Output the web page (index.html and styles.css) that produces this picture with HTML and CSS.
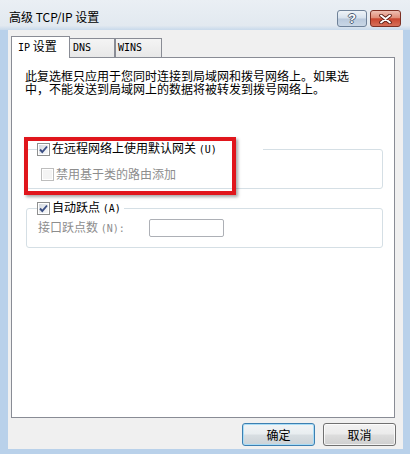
FILE: index.html
```html
<!DOCTYPE html>
<html lang="zh-CN">
<head>
<meta charset="utf-8">
<title>高级 TCP/IP 设置</title>
<link rel="stylesheet" href="styles.css">
</head>
<body>
<div class="window">
  <div class="titlebar">
    <span class="title">高级 TCP/IP 设置</span>
    <div class="caption-btns">
      <div class="cbtn help"><span class="qmark">?</span></div>
      <div class="cbtn close">
        <svg width="13" height="10" viewBox="0 0 13 10">
          <path d="M2 1.5 L11 8.5 M11 1.5 L2 8.5" stroke="#5a1d14" stroke-width="3.6" stroke-linecap="round" fill="none"/>
          <path d="M2 1.5 L11 8.5 M11 1.5 L2 8.5" stroke="#ffffff" stroke-width="1.9" stroke-linecap="round" fill="none"/>
        </svg>
      </div>
    </div>
  </div>
  <div class="client">
    <div class="tabs">
      <div class="tab active"><span class="lat">IP</span> 设置</div>
      <div class="tab dns"><span class="lat">DNS</span></div>
      <div class="tab wins"><span class="lat">WINS</span></div>
    </div>
    <div class="panel">
      <p class="desc">此复选框只应用于您同时连接到局域网和拨号网络上。如果选<br>中，不能发送到局域网上的数据将被转发到拨号网络上。</p>
      <fieldset class="group g1">
        <legend class="lg1">
          <span class="check">
            <span class="box checked">
              <svg width="11" height="11" viewBox="0 0 11 11"><path d="M2 5.5 L4.3 8 L9 2.5" stroke="#3b4f84" stroke-width="1.9" fill="none"/></svg>
            </span>
            <span>在远程网络上使用默认网关 <span class="lat">(U)</span></span>
          </span>
        </legend>
        <div class="check disabled sub">
          <span class="box"></span>
          <span>禁用基于类的路由添加</span>
        </div>
      </fieldset>
      <fieldset class="group g2">
        <legend class="lg2">
          <span class="check">
            <span class="box checked">
              <svg width="11" height="11" viewBox="0 0 11 11"><path d="M2 5.5 L4.3 8 L9 2.5" stroke="#3b4f84" stroke-width="1.9" fill="none"/></svg>
            </span>
            <span>自动跃点 <span class="lat">(A)</span></span>
          </span>
        </legend>
        <div class="metric-row">
          <span class="metric-label">接口跃点数 <span class="lat">(N):</span></span>
          <span class="input"></span>
        </div>
      </fieldset>
    </div>
    <div class="buttons">
      <button class="btn default">确定</button>
      <button class="btn">取消</button>
    </div>
  </div>
  <div class="highlight"></div>
</div>
</body>
</html>
```

FILE: styles.css
```css
* { box-sizing: border-box; }
html, body { margin: 0; padding: 0; }
body {
  width: 410px;
  height: 454px;
  overflow: hidden;
  font-family: "Noto Sans CJK SC", "Noto Sans", sans-serif;
  font-size: 12px;
  color: #000;
}
.lat {
  font-family: "DejaVu Sans Mono", "Liberation Mono", monospace;
  font-size: 10px;
}
.window {
  width: 410px;
  height: 454px;
  background: #b9d1ea;
  display: flex;
  flex-direction: column;
  position: relative;
}
.titlebar {
  height: 30px;
  flex: none;
  display: flex;
  justify-content: space-between;
  align-items: flex-start;
  padding: 0 9px 0 9px;
  background: linear-gradient(#eaeff4 0%, #e2e9f0 85%, #c8d9eb 100%);
}
.title {
  padding-top: 10px;
  line-height: 14px;
  white-space: nowrap;
}
.caption-btns {
  display: flex;
  gap: 3px;
  margin-top: 10px;
}
.cbtn {
  height: 17px;
  border-radius: 3px;
  display: flex;
  align-items: center;
  justify-content: center;
}
.help {
  width: 30px;
  border: 1px solid #6f8299;
  background: linear-gradient(#eef3f8 0%, #d6e1ed 48%, #b9c9dc 52%, #c9d7e6 100%);
}
.qmark {
  font-family: "Liberation Sans", sans-serif;
  font-weight: bold;
  font-size: 13px;
  line-height: 13px;
  color: #fff;
  text-shadow: 1px 0 0 #4c5d73, -1px 0 0 #4c5d73, 0 1px 0 #4c5d73, 0 -1px 0 #4c5d73;
}
.close {
  width: 31px;
  border: 1px solid #7d3024;
  background: linear-gradient(#efc0b3 0%, #e08d78 45%, #c9462f 52%, #d6705a 100%);
}
.client {
  flex: 1;
  margin: 0 7px 5px 8px;
  background: #f0f0f0;
  display: flex;
  flex-direction: column;
}
.tabs {
  display: flex;
  align-items: flex-end;
  height: 22px;
  margin-top: 6px;
  margin-bottom: -1px;
  padding-left: 3px;
  position: relative;
  z-index: 1;
}
.tab {
  height: 20px;
  border: 1px solid #898c95;
  background: linear-gradient(#f4f4f4, #e8e8e8);
  line-height: 14px;
  padding: 0 0 0 3px;
  white-space: nowrap;
}
.tab.active {
  width: 59px;
  height: 22px;
  background: #fff;
  border-bottom: none;
  padding: 2px 0 0 6px;
  position: relative;
  z-index: 2;
}
.tab.dns {
  width: 46px;
  margin-left: -1px;
  padding-left: 3px;
}
.tab.wins {
  width: 47px;
  padding-left: 2px;
}
.panel {
  margin-left: 3px;
  width: 384px;
  height: 361px;
  border: 1px solid #898c95;
  background: #fff;
  padding-top: 11px;
}
.desc {
  margin: 0 0 0 13px;
  line-height: 13px;
  white-space: nowrap;
}
.group {
  margin: 0 11px 0 14px;
  border: 1px solid #d5dfe5;
  border-radius: 3px;
  min-width: 0;
}
.g1 {
  margin-top: 46px;
  padding: 10px 0 7px 10px;
}
.g2 {
  margin-top: 11px;
  padding: 3px 0 10px 10px;
}
legend {
  padding: 0;
  line-height: 14px;
}
.lg1 { width: 226px; }
.lg2 { padding-right: 3px; }
.check {
  display: flex;
  align-items: center;
  gap: 2px;
  white-space: nowrap;
  line-height: 14px;
}
.box {
  width: 13px;
  height: 13px;
  flex: none;
  border: 1px solid #8e8f8f;
  background: linear-gradient(135deg, #cfd5dd 0%, #eef0f2 60%, #fafafa 100%);
  box-shadow: inset 0 0 0 1px #fff;
  display: flex;
  align-items: center;
  justify-content: center;
}
.disabled { color: #8d8d8d; }
.disabled .box {
  border-color: #bdbdbd;
  background: #f4f4f4;
}
.sub { margin-left: 4px; }
.metric-row {
  display: flex;
  align-items: center;
  height: 18px;
  margin-left: 1px;
}
.metric-label {
  width: 111px;
  color: #8d8d8d;
  white-space: nowrap;
  line-height: 14px;
}
.input {
  width: 75px;
  height: 18px;
  border: 1px solid #adb0b6;
  border-radius: 2px;
  background: #fff;
}
.buttons {
  display: flex;
  justify-content: flex-end;
  gap: 8px;
  margin-top: 5px;
  padding-right: 7px;
}
.btn {
  width: 73px;
  height: 23px;
  padding: 0;
  border: 1px solid #707070;
  border-radius: 3px;
  background: linear-gradient(#f2f2f2 0%, #ebebeb 48%, #dddddd 52%, #cfcfcf 100%);
  box-shadow: inset 0 0 0 1px rgba(255, 255, 255, 0.75);
  font-family: "Noto Sans CJK SC", "Noto Sans", sans-serif;
  font-size: 12px;
  line-height: 14px;
  color: #000;
}
.btn.default {
  border-color: #3c7fb1;
  box-shadow: inset 0 0 0 1px #a9dcf6;
  background: linear-gradient(#f1f4f6 0%, #e8edf0 48%, #d8dee2 52%, #cbd2d7 100%);
}
.highlight {
  position: absolute;
  left: 24px;
  top: 137px;
  width: 212px;
  height: 58px;
  border: 4px solid #e0161c;
  box-shadow: 2px 2px 3px rgba(0, 0, 0, 0.35);
  pointer-events: none;
}
```
